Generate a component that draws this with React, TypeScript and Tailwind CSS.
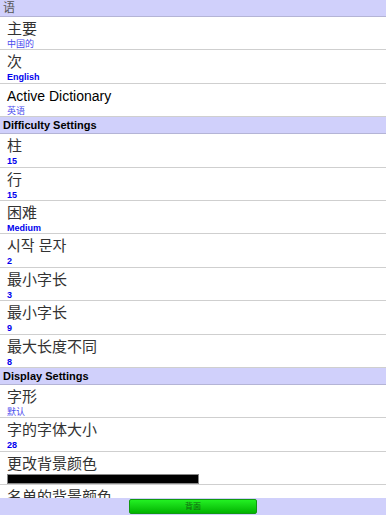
const font = "font-['Liberation_Sans','Noto_Sans_CJK_SC',sans-serif]";

type Item = { title: string; value?: string; bar?: boolean; latin?: boolean };

const sections: { header: string; bold?: boolean; items: Item[] }[] = [
  {
    header: "语",
    items: [
      { title: "主要", value: "中国的" },
      { title: "次", value: "English", latin: true },
      { title: "Active Dictionary", value: "英语" },
    ],
  },
  {
    header: "Difficulty Settings",
    bold: true,
    items: [
      { title: "柱", value: "15", latin: true },
      { title: "行", value: "15", latin: true },
      { title: "困难", value: "Medium", latin: true },
      { title: "시작 문자", value: "2", latin: true },
      { title: "最小字长", value: "3", latin: true },
      { title: "最小字长", value: "9", latin: true },
      { title: "最大长度不同", value: "8", latin: true },
    ],
  },
  {
    header: "Display Settings",
    bold: true,
    items: [
      { title: "字形", value: "默认" },
      { title: "字的字体大小", value: "28", latin: true },
      { title: "更改背景颜色", bar: true },
      { title: "名单的背景颜色", value: "" },
    ],
  },
];

function Row({ item }: { item: Item }) {
  const isLatinTitle = /^[A-Za-z ]+$/.test(item.title);
  return (
    <div className="h-[33.4px] shrink-0 border-b border-[#cfcfcf] bg-white px-[7px] flex flex-col">
      <div
        className={`leading-[18px] pt-[3px] whitespace-nowrap ${
          isLatinTitle ? "text-[14px] text-black" : "text-[15px] text-[#333]"
        }`}
      >
        {item.title}
      </div>
      {item.bar ? (
        <div className="mt-[1px] h-[12px] w-[192px] bg-black border border-[#888]" />
      ) : (
        <div
          className={`text-[9px] leading-[12px] whitespace-nowrap ${
            item.latin ? "font-bold text-[#0000ee]" : "text-[#4a4aee]"
          }`}
        >
          {item.value}
        </div>
      )}
    </div>
  );
}

export default function App() {
  return (
    <div className={`w-[386px] h-[515px] flex flex-col bg-white overflow-hidden ${font}`}>
      <div className="flex-1 overflow-hidden flex flex-col">
        {sections.map((s, i) => (
          <div key={i} className="flex flex-col shrink-0">
            <div
              className={`h-[17px] shrink-0 bg-[#d0d0fb] border-b border-[#b4b4d6] px-[3px] flex items-center ${
                s.bold ? "text-[11px] font-bold text-black" : "text-[12px] text-[#555]"
              }`}
            >
              {s.header}
            </div>
            {s.items.map((it, j) => (
              <Row key={j} item={it} />
            ))}
          </div>
        ))}
      </div>
      <div className="h-[17px] shrink-0 bg-[#d0d0fb] flex items-center">
        <button className="ml-[129px] w-[128px] h-[15px] rounded-[2px] border border-[#119911] bg-gradient-to-b from-[#22f022] to-[#00b400] text-[8px] leading-none text-[#116611] flex items-center justify-center">
          背面
        </button>
      </div>
    </div>
  );
}
